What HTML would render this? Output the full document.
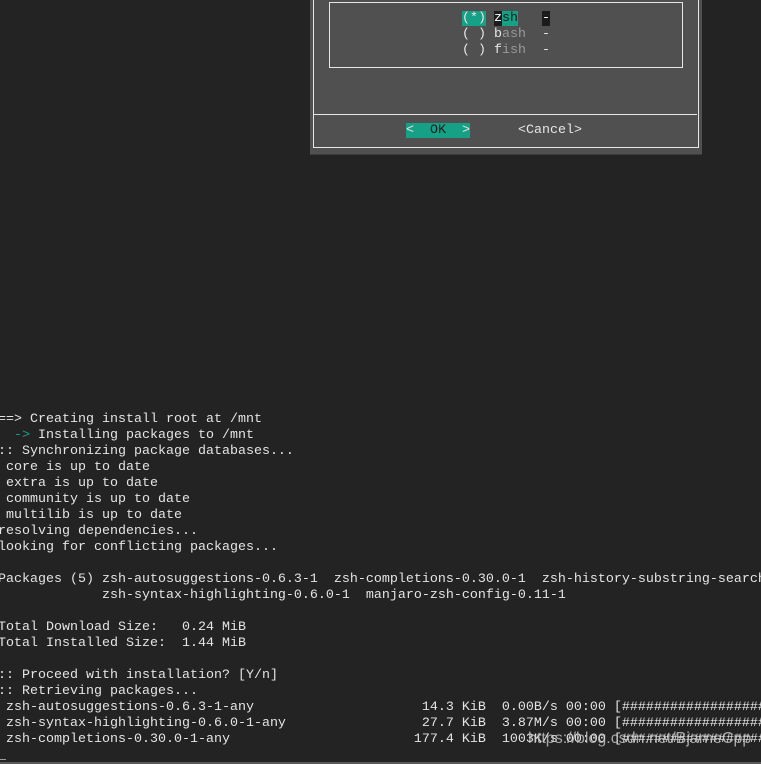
<!DOCTYPE html>
<html><head><meta charset="utf-8"><style>
html,body{margin:0;padding:0;width:761px;height:764px;overflow:hidden;background:#232323;}
body{position:relative;font-family:"Liberation Mono",monospace;font-size:13.33px;color:#e4e4e4;}
pre{margin:0;font:inherit;line-height:16px;position:absolute;white-space:pre;}
.t{color:#16a085}
.dlg{position:absolute;left:310px;top:0;width:392px;height:155px;background:#4f504f;}
.dlg:after{content:"";position:absolute;left:0;bottom:0;width:392px;height:1px;background:#3a3a3a}
.fr{position:absolute;border:1px solid #e6e6e6;}
.hl{background:#16a085}
.g{color:#9a9a9a}
.k{background:#1c1c1c;color:#fff}
.wm{position:absolute;left:528px;top:730px;font-family:"Liberation Sans",sans-serif;font-size:16px;color:rgba(200,200,200,0.8);}
</style></head><body>
<div class="dlg">
  <div class="fr" style="left:3px;top:-2px;width:384px;height:148px;"></div>
  <div class="fr" style="left:3px;top:114px;width:384px;height:0;border-width:1px 0 0 0"></div>
  <div class="fr" style="left:19px;top:2px;width:352px;height:64px;"></div>
</div>
<pre style="left:462px;top:11px;color:#e6e6e6"><span class="hl">(*)</span> <span class="k">z</span><span class="hl" style="color:#1c1c1c">sh</span>   <span class="k">-</span>
( ) b<span class="g">ash</span>  -
( ) f<span class="g">ish</span>  -</pre>
<pre style="left:406px;top:123px;color:#e6e6e6"><span class="hl">&lt;  <span style="color:#1c1c1c">OK</span>  &gt;</span>      &lt;Cancel&gt;</pre>
<pre style="left:-2px;top:412px">==&gt; Creating install root at /mnt
  <span class="t">-&gt;</span> Installing packages to /mnt
:: Synchronizing package databases...
 core is up to date
 extra is up to date
 community is up to date
 multilib is up to date
resolving dependencies...
looking for conflicting packages...

Packages (5) zsh-autosuggestions-0.6.3-1  zsh-completions-0.30.0-1  zsh-history-substring-search
             zsh-syntax-highlighting-0.6.0-1  manjaro-zsh-config-0.11-1

Total Download Size:   0.24 MiB
Total Installed Size:  1.44 MiB

:: Proceed with installation? [Y/n]
:: Retrieving packages...
 zsh-autosuggestions-0.6.3-1-any                     14.3 KiB  0.00B/s 00:00 [####################
 zsh-syntax-highlighting-0.6.0-1-any                 27.7 KiB  3.87M/s 00:00 [####################
 zsh-completions-0.30.0-1-any                       177.4 KiB  1003K/s 00:00 [####################
_</pre>
<div class="wm">https://blog.csdn.net/BjarneCpp</div>
<div style="position:absolute;left:0;top:762px;width:761px;height:2px;background:#5a5a5a"></div>
</body></html>
